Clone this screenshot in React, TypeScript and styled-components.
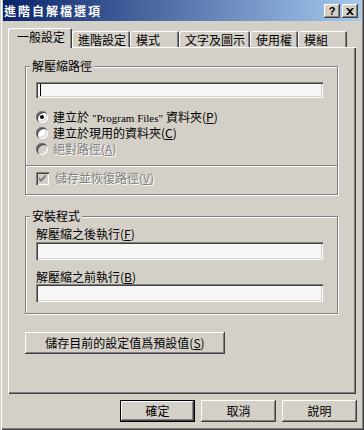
import React from 'react';
import styled, { createGlobalStyle } from 'styled-components';

const GlobalStyle = createGlobalStyle`
  html, body {
    margin: 0;
    padding: 0;
    background: #d4d0c8;
  }
  body {
    font-family: "Noto Sans CJK TC", "Liberation Sans", sans-serif;
    font-size: 12px;
    color: #000;
  }
  * {
    box-sizing: border-box;
  }
`;

const Window = styled.div`
  width: 364px;
  height: 430px;
  background: #d4d0c8;
  display: flex;
  flex-direction: column;
  padding: 0 3px 3px 3px;
  box-shadow: inset 1px 0 0 #d4d0c8, inset 2px 0 0 #fff,
    inset -1px -1px 0 #404040, inset -2px -2px 0 #808080;
`;

const TitleBar = styled.div`
  height: 21px;
  flex-shrink: 0;
  display: flex;
  align-items: center;
  justify-content: space-between;
  padding: 0 3px 0 1px;
  background: linear-gradient(to right, #0a246a, #a6caf0);
`;

const TitleText = styled.span`
  color: #fff;
  font-weight: bold;
  font-size: 12px;
  letter-spacing: 2px;
  line-height: 14px;
`;

const CaptionButtons = styled.div`
  display: flex;
  gap: 2px;
  padding-top: 1px;
`;

const CaptionButton = styled.div`
  width: 16px;
  height: 14px;
  background: #d4d0c8;
  display: flex;
  align-items: center;
  justify-content: center;
  font: bold 11px "Liberation Sans", sans-serif;
  box-shadow: inset -1px -1px 0 #404040, inset 1px 1px 0 #fff,
    inset -2px -2px 0 #808080;
`;

const TabRow = styled.div`
  display: flex;
  align-items: flex-end;
  height: 19px;
  margin: 7px 0 0 5px;
  position: relative;
  z-index: 1;
  flex-shrink: 0;
`;

const Tab = styled.div<{ $active?: boolean; $w: number }>`
  width: ${p => p.$w}px;
  height: ${p => (p.$active ? 20 : 16)}px;
  margin-bottom: ${p => (p.$active ? -1 : 0)}px;
  padding: 2px 0 0 ${p => (p.$active ? 9 : 6)}px;
  line-height: 14px;
  white-space: nowrap;
  background: #d4d0c8;
  border-radius: 2px 2px 0 0;
  box-shadow: inset 1px 1px 0 #fff, inset -1px 0 0 #404040,
    inset -2px 0 0 #808080;
`;

const Panel = styled.div`
  height: 347px;
  flex-shrink: 0;
  margin: 0 5px;
  padding: 19px 18px 0 17px;
  display: flex;
  flex-direction: column;
  align-items: flex-start;
  box-shadow: inset 1px 1px 0 #fff, inset -1px -1px 0 #404040,
    inset -2px -2px 0 #808080;
`;

const GroupBox = styled.div<{ $gap?: number; $pb: number }>`
  align-self: stretch;
  margin-top: ${p => p.$gap ?? 0}px;
  padding-bottom: ${p => p.$pb}px;
  border: 1px solid #808080;
  box-shadow: inset 1px 1px 0 #fff, 1px 1px 0 #fff;
  display: flex;
  flex-direction: column;
`;

const GroupLabel = styled.div`
  align-self: flex-start;
  margin: -8px 0 0 4px;
  padding: 0 2px;
  line-height: 14px;
  background: #d4d0c8;
`;

const TextField = styled.div<{ $h: number; $mt: number }>`
  height: ${p => p.$h}px;
  margin: ${p => p.$mt}px 14px 0 10px;
  background: #f7f7f7;
  display: flex;
  align-items: center;
  box-shadow: inset 1px 1px 0 #808080, inset 2px 2px 0 #404040,
    inset -1px -1px 0 #fff, inset -2px -2px 0 #d4d0c8;
`;

const Caret = styled.span`
  width: 1px;
  height: 12px;
  margin-left: 4px;
  background: #000;
`;

const OptionList = styled.div`
  display: flex;
  flex-direction: column;
  margin-top: 11px;
  padding-left: 10px;
`;

const OptionRow = styled.div<{ $disabled?: boolean; $gap?: number }>`
  height: 16px;
  display: flex;
  align-items: center;
  gap: ${p => p.$gap ?? 5}px;
  line-height: 14px;
  white-space: nowrap;
  color: ${p => (p.$disabled ? '#808080' : '#000')};
  text-shadow: ${p => (p.$disabled ? '1px 1px 0 #fff' : 'none')};
`;

const Radio = styled.span<{ $checked?: boolean; $disabled?: boolean }>`
  width: 12px;
  height: 12px;
  flex-shrink: 0;
  border-radius: 50%;
  background: ${p => (p.$disabled ? '#d4d0c8' : '#fff')};
  display: flex;
  align-items: center;
  justify-content: center;
  box-shadow: inset 1px 1px 0 #808080, inset 2px 2px 0 #404040,
    inset -1px -1px 0 #fff, inset -2px -2px 0 #d4d0c8;

  &::after {
    content: '';
    width: 4px;
    height: 4px;
    border-radius: 50%;
    background: #000;
    display: ${p => (p.$checked ? 'block' : 'none')};
  }
`;

const CheckBox = styled.span`
  width: 13px;
  height: 13px;
  flex-shrink: 0;
  background: #d4d0c8;
  display: flex;
  align-items: center;
  justify-content: center;
  box-shadow: inset 1px 1px 0 #808080, inset 2px 2px 0 #404040,
    inset -1px -1px 0 #fff, inset -2px -2px 0 #d4d0c8;
`;

const Latin = styled.span`
  font-family: "Liberation Serif", "DejaVu Serif", serif;
  font-size: 11px;
  margin: 0 3px;
`;

const Separator = styled.div`
  height: 2px;
  margin-top: 8px;
  border-top: 1px solid #808080;
  border-bottom: 1px solid #fff;
`;

const CheckRow = styled.div`
  margin-top: 3px;
  padding-left: 10px;
`;

const FieldLabel = styled.div<{ $mt: number }>`
  margin: ${p => p.$mt}px 0 0 10px;
  line-height: 14px;
`;

const Button = styled.div<{ $w: number; $default?: boolean }>`
  width: ${p => p.$w}px;
  height: 22px;
  flex-shrink: 0;
  display: flex;
  align-items: center;
  justify-content: center;
  line-height: 14px;
  background: #d4d0c8;
  border: ${p => (p.$default ? '1px solid #000' : 'none')};
  box-shadow: inset -1px -1px 0 #404040, inset 1px 1px 0 #fff,
    inset -2px -2px 0 #808080;
`;

const DefaultsButton = styled(Button)`
  margin-top: 18px;
`;

const ButtonRow = styled.div`
  display: flex;
  justify-content: flex-end;
  gap: 6px;
  margin: 6px 4px 0 0;
`;

const tabs = [
  { label: '一般設定', w: 64, active: true },
  { label: '進階設定', w: 58 },
  { label: '模式', w: 49 },
  { label: '文字及圖示', w: 71 },
  { label: '使用權', w: 48 },
  { label: '模組', w: 49 },
];

const App: React.FC = () => {
  return (
    <>
      <GlobalStyle />
      <Window>
        <TitleBar>
          <TitleText>進階自解檔選項</TitleText>
          <CaptionButtons>
            <CaptionButton>?</CaptionButton>
            <CaptionButton>
              <svg width="8" height="7" viewBox="0 0 8 7">
                <path d="M0 0h2l2 2 2-2h2L5 3.5 8 7H6L4 5 2 7H0l3-3.5z" fill="#000" />
              </svg>
            </CaptionButton>
          </CaptionButtons>
        </TitleBar>

        <TabRow>
          {tabs.map(t => (
            <Tab key={t.label} $w={t.w} $active={t.active}>
              {t.label}
            </Tab>
          ))}
        </TabRow>

        <Panel>
          <GroupBox $pb={8}>
            <GroupLabel>解壓縮路徑</GroupLabel>
            <TextField $h={16} $mt={9}>
              <Caret />
            </TextField>
            <OptionList>
              <OptionRow>
                <Radio $checked />
                <span>
                  建立於<Latin>"Program Files"</Latin>資料夾(<u>P</u>)
                </span>
              </OptionRow>
              <OptionRow>
                <Radio />
                <span>建立於現用的資料夾(<u>C</u>)</span>
              </OptionRow>
              <OptionRow $disabled>
                <Radio $disabled />
                <span>絕對路徑(<u>A</u>)</span>
              </OptionRow>
            </OptionList>
            <Separator />
            <CheckRow>
              <OptionRow $disabled $gap={6}>
                <CheckBox>
                  <svg width="7" height="7" viewBox="0 0 7 7">
                    <path d="M0 2v3l2 2 5-5V-1L2 4z" fill="#808080" />
                  </svg>
                </CheckBox>
                <span>儲存並恢復路徑(<u>V</u>)</span>
              </OptionRow>
            </CheckRow>
          </GroupBox>

          <GroupBox $gap={21} $pb={11}>
            <GroupLabel>安裝程式</GroupLabel>
            <FieldLabel $mt={4}>解壓縮之後執行(<u>F</u>)</FieldLabel>
            <TextField $h={18} $mt={1} />
            <FieldLabel $mt={10}>解壓縮之前執行(<u>B</u>)</FieldLabel>
            <TextField $h={18} $mt={0} />
          </GroupBox>

          <DefaultsButton $w={200}>儲存目前的設定值爲預設值(<u>S</u>)</DefaultsButton>
        </Panel>

        <ButtonRow>
          <Button $w={75} $default>確定</Button>
          <Button $w={75}>取消</Button>
          <Button $w={75}>說明</Button>
        </ButtonRow>
      </Window>
    </>
  );
};

export default App;
